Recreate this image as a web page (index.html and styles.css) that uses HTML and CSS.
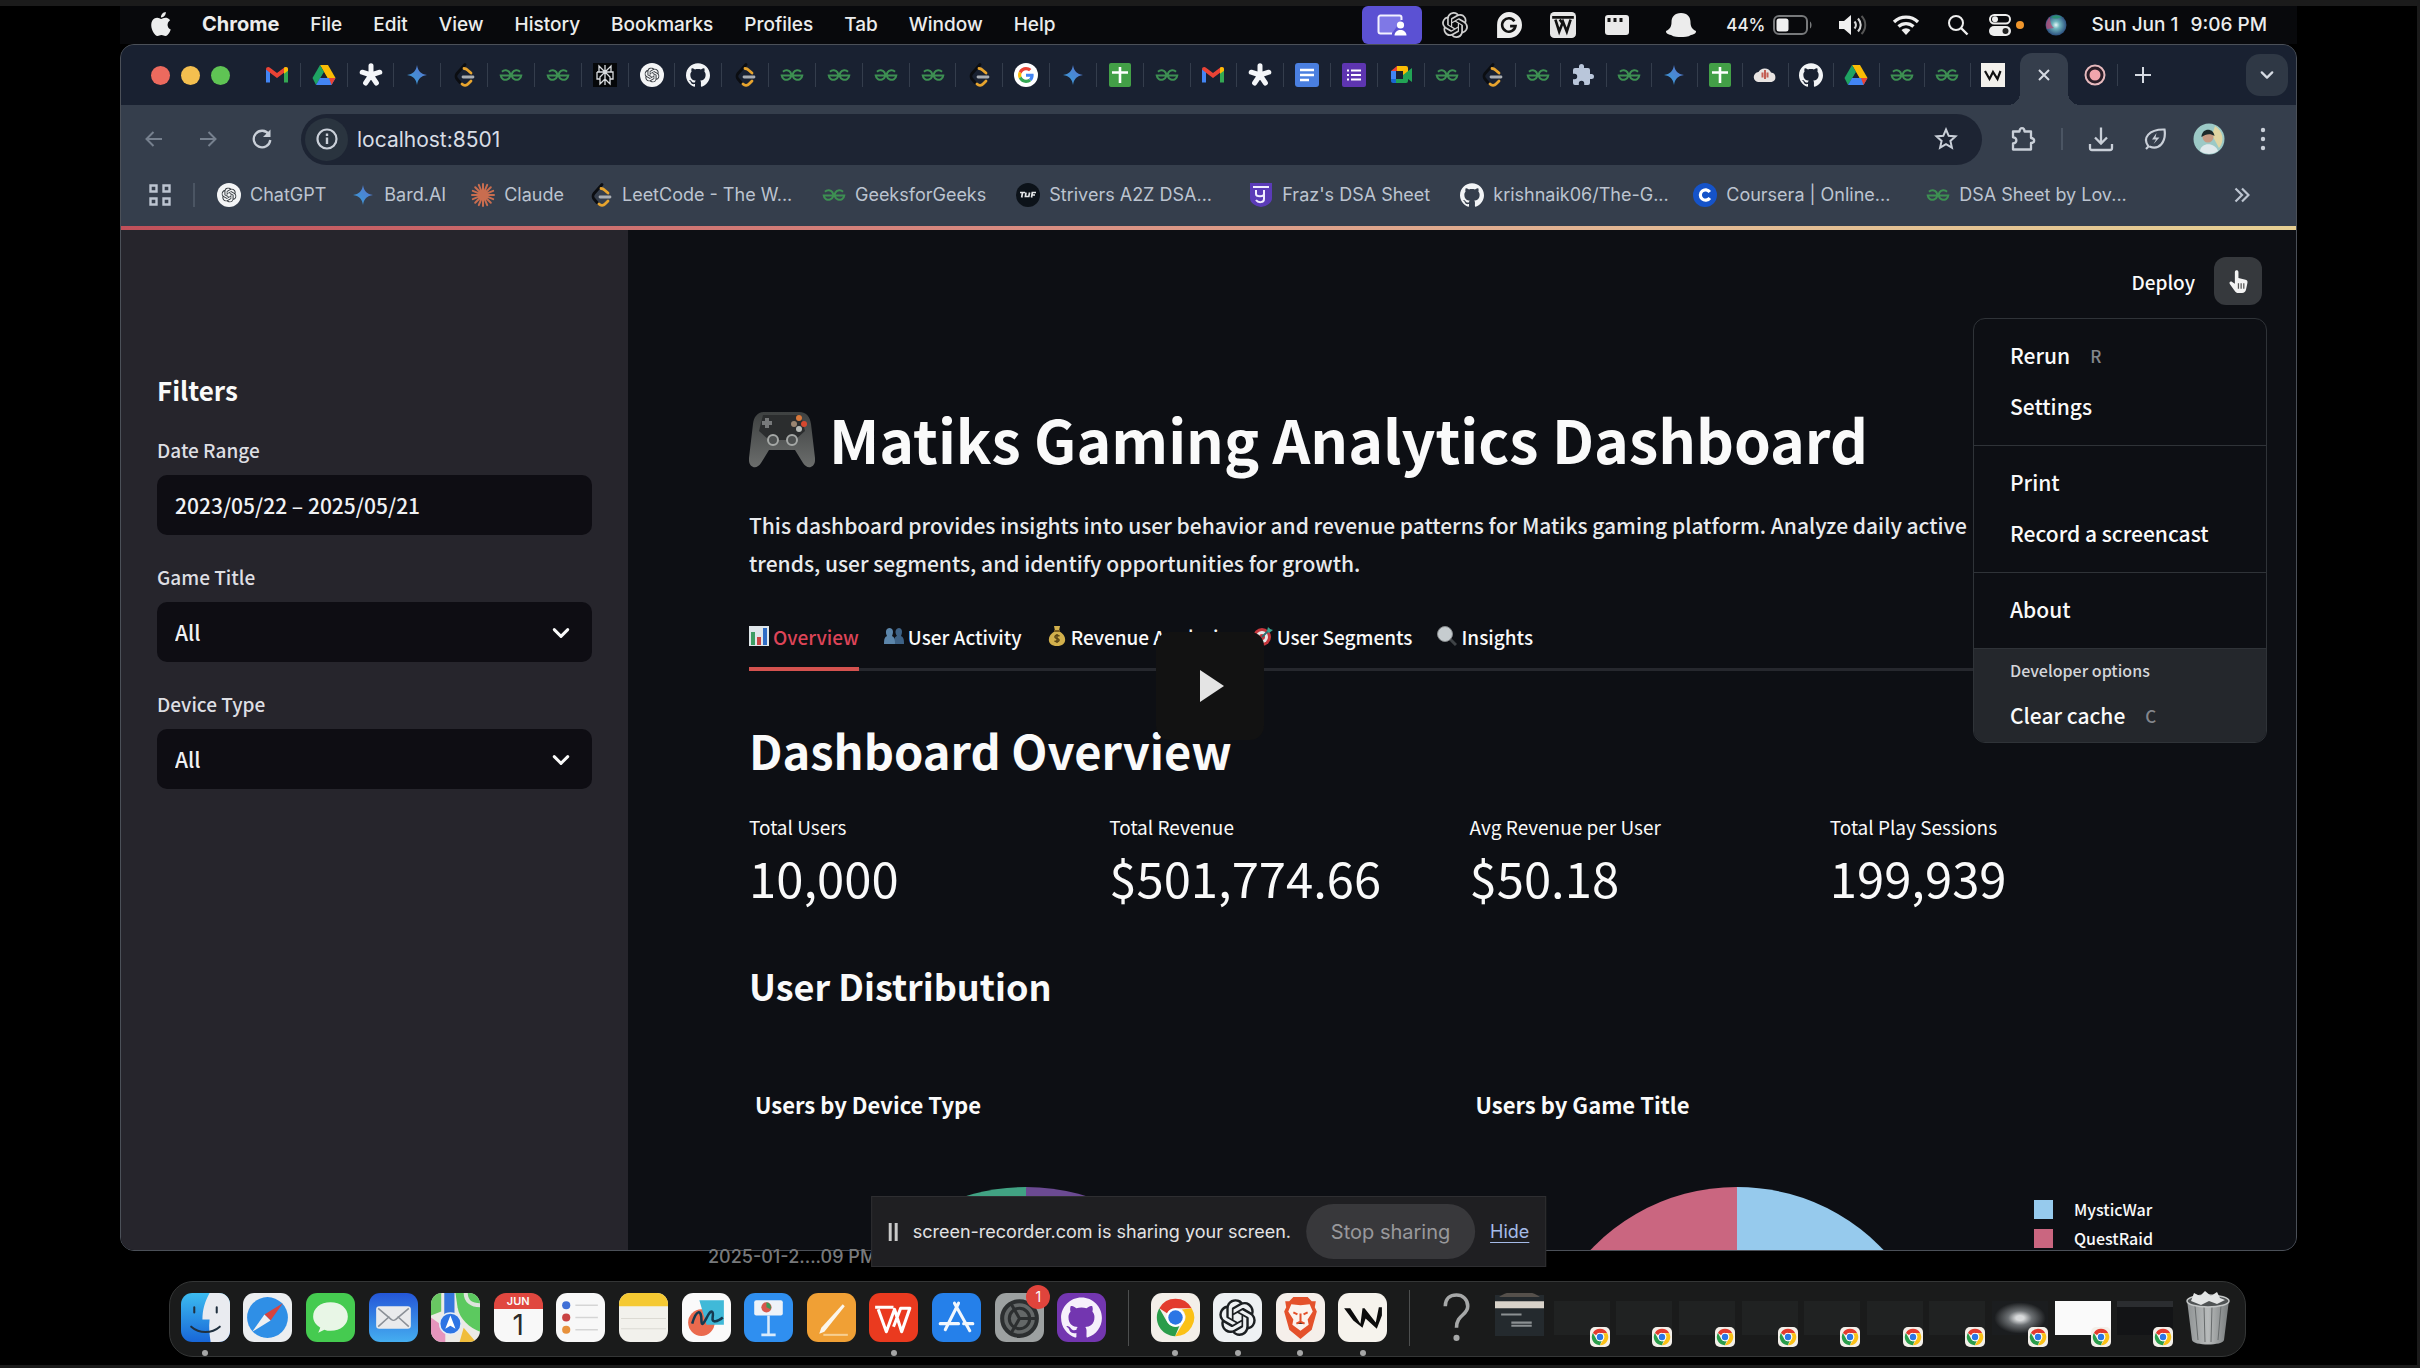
FILE: index.html
```html
<!DOCTYPE html>
<html lang="en">
<head>
<meta charset="utf-8">
<meta name="viewport" content="width=device-width, initial-scale=1">
<title>Matiks Gaming Analytics Dashboard</title>
<link rel="stylesheet" href="styles.css">
</head>
<body>
<svg class="sprite" aria-hidden="true">
  <symbol id="apple" viewBox="0 0 24 24"><path fill="currentColor" d="M12.152 6.896c-.948 0-2.415-1.078-3.96-1.04-2.04.027-3.91 1.183-4.961 3.014-2.117 3.675-.546 9.103 1.519 12.09 1.013 1.454 2.208 3.09 3.792 3.039 1.52-.065 2.09-.987 3.935-.987 1.831 0 2.35.987 3.96.948 1.637-.026 2.676-1.48 3.676-2.948 1.156-1.688 1.636-3.325 1.662-3.415-.039-.013-3.182-1.221-3.22-4.857-.026-3.04 2.48-4.494 2.597-4.559-1.429-2.09-3.623-2.324-4.39-2.376-2-.156-3.675 1.09-4.61 1.09zM15.53 3.83c.843-1.012 1.4-2.427 1.245-3.83-1.207.052-2.662.805-3.532 1.818-.78.896-1.454 2.338-1.273 3.714 1.338.104 2.715-.688 3.559-1.701"/></symbol>
  <symbol id="openai" viewBox="0 0 24 24"><path fill="currentColor" d="M22.2819 9.8211a5.9847 5.9847 0 0 0-.5157-4.9108 6.0462 6.0462 0 0 0-6.5098-2.9A6.0651 6.0651 0 0 0 4.9807 4.1818a5.9847 5.9847 0 0 0-3.9977 2.9 6.0462 6.0462 0 0 0 .7427 7.0966 5.98 5.98 0 0 0 .511 4.9107 6.051 6.051 0 0 0 6.5146 2.9001A5.9847 5.9847 0 0 0 13.2599 24a6.0557 6.0557 0 0 0 5.7718-4.2058 5.9894 5.9894 0 0 0 3.9977-2.9001 6.0557 6.0557 0 0 0-.7475-7.0729zm-9.022 12.6081a4.4755 4.4755 0 0 1-2.8764-1.0408l.1419-.0804 4.7783-2.7582a.7948.7948 0 0 0 .3927-.6813v-6.7369l2.02 1.1686a.071.071 0 0 1 .038.052v5.5826a4.504 4.504 0 0 1-4.4945 4.4944zm-9.6607-4.1254a4.4708 4.4708 0 0 1-.5346-3.0137l.142.0852 4.783 2.7582a.7712.7712 0 0 0 .7806 0l5.8428-3.3685v2.3324a.0804.0804 0 0 1-.0332.0615L9.74 19.9502a4.4992 4.4992 0 0 1-6.1408-1.6464zM2.3408 7.8956a4.485 4.485 0 0 1 2.3655-1.9728V11.6a.7664.7664 0 0 0 .3879.6765l5.8144 3.3543-2.0201 1.1685a.0757.0757 0 0 1-.071 0l-4.8303-2.7865A4.504 4.504 0 0 1 2.3408 7.872zm16.5963 3.8558L13.1038 8.364 15.1192 7.2a.0757.0757 0 0 1 .071 0l4.8303 2.7913a4.4944 4.4944 0 0 1-.6765 8.1042v-5.6772a.79.79 0 0 0-.407-.667zm2.0107-3.0231l-.142-.0852-4.7735-2.7818a.7759.7759 0 0 0-.7854 0L9.409 9.2297V6.8974a.0662.0662 0 0 1 .0284-.0615l4.8303-2.7866a4.4992 4.4992 0 0 1 6.6802 4.66zM8.3065 12.863l-2.02-1.1638a.0804.0804 0 0 1-.038-.0567V6.0742a4.4992 4.4992 0 0 1 7.3757-3.4537l-.142.0805L8.704 5.459a.7948.7948 0 0 0-.3927.6813zm1.0976-2.3654l2.602-1.4998 2.6069 1.4998v2.9994l-2.5974 1.4997-2.6067-1.4997Z"/></symbol>
  <symbol id="github" viewBox="0 0 24 24"><path fill="currentColor" d="M12 .297c-6.63 0-12 5.373-12 12 0 5.303 3.438 9.8 8.205 11.385.6.113.82-.258.82-.577 0-.285-.01-1.04-.015-2.04-3.338.724-4.042-1.61-4.042-1.61C4.422 18.07 3.633 17.7 3.633 17.7c-1.087-.744.084-.729.084-.729 1.205.084 1.838 1.236 1.838 1.236 1.07 1.835 2.809 1.305 3.495.998.108-.776.417-1.305.76-1.605-2.665-.3-5.466-1.332-5.466-5.93 0-1.31.465-2.38 1.235-3.22-.135-.303-.54-1.523.105-3.176 0 0 1.005-.322 3.3 1.23.96-.267 1.98-.399 3-.405 1.02.006 2.04.138 3 .405 2.28-1.552 3.285-1.23 3.285-1.23.645 1.653.24 2.873.12 3.176.765.84 1.23 1.91 1.23 3.22 0 4.61-2.805 5.625-5.475 5.92.42.36.81 1.096.81 2.22 0 1.606-.015 2.896-.015 3.286 0 .315.21.69.825.57C20.565 22.092 24 17.592 24 12.297c0-6.627-5.373-12-12-12"/></symbol>
  <symbol id="chatgpt" viewBox="0 0 24 24"><circle cx="12" cy="12" r="12" fill="#f4f5f6"/><g color="#33383d"><use href="#openai" x="4.500" y="4.500" width="15" height="15"/></g></symbol>
  <symbol id="gmail" viewBox="0 0 24 24"><path d="M1 19.500V6l4 3v10.500z" fill="#4285f4"/><path d="M23 19.500V6l-4 3v10.500z" fill="#34a853"/><path d="M1 6.500C1 4 3.500 3.500 5 4.700L12 10l7-5.300c1.500-1.200 4-.7 4 1.800l-4 3.200-7 5.300-7-5.300z" fill="#ea4335"/><path d="M19 4.700c1.500-1.200 4-.7 4 1.800v1.200l-4 3z" fill="#fbbc04"/></symbol>
  <symbol id="drive" viewBox="0 0 24 24"><path d="M8 2h8l7.500 13h-8z" fill="#fbbc04"/><path d="M8 2l4 7-8 13-3.500-7z" fill="#1ea362"/><path d="M4 22l4-7h15.500l-4 7z" fill="#4285f4"/><path d="M23.500 15h-6.500l2.500 7z" fill="#ea4335"/><path d="M12 9.500l3.200 5.500H8.800z" fill="#192131"/></symbol>
  <symbol id="asterisk" viewBox="0 0 24 24"><g stroke="#f4f6f9" stroke-width="5" stroke-linecap="round"><path d="M12 12V2.800M12 12l8.800-2.800M12 12l5.400 8M12 12l-5.400 8M12 12L3.200 9.200"/></g></symbol>
  <symbol id="gemini" viewBox="0 0 24 24"><linearGradient id="gem" x1="0" y1="1" x2="1" y2="0"><stop stop-color="#36a0d8"/><stop offset="1" stop-color="#5a72cf"/></linearGradient><path fill="url(#gem)" d="M12 2c.8 6 4 9.200 10 10-6 .8-9.200 4-10 10-.8-6-4-9.200-10-10 6-.8 9.200-4 10-10z"/></symbol>
  <symbol id="leet" viewBox="0 0 24 24"><g fill="none" stroke-linecap="round" stroke-width="2.800"><path d="M13 1.500L5 10.500c-1.300 1.500-1.300 4 0 5.500l3 3.500" stroke="#0b0d11"/><path d="M10 21c2 2 4.500 1.500 6 0l3-3M12 5.500c1.500 0 2.500.5 3.500 1.500L19 10" stroke="#e7a42e"/><path d="M11 14h10" stroke="#a9adb3"/></g></symbol>
  <symbol id="gfg" viewBox="0 0 24 24"><g fill="none" stroke="#3d8f52" stroke-width="2"><path d="M21 8.700A4.800 4.800 0 1 0 22.300 12.500H12.500"/><path d="M3 8.700A4.800 4.800 0 1 1 1.700 12.500H11.500"/></g></symbol>
  <symbol id="perplexity" viewBox="0 0 24 24"><path fill="#050709" d="M0 0h24v24H0z"/><path d="M12 2v20M6 3l6 6 6-6v6H6zM4 9h16v7h-3M4 9v7h3M7 21v-7l5-5 5 5v7l-5-5z" fill="none" stroke="#d9dcdf" stroke-width="1.300"/></symbol>
  <symbol id="gglyph" viewBox="0 0 48 48"><path fill="#EA4335" d="M24 9.500c3.540 0 6.710 1.220 9.210 3.600l6.850-6.850C35.900 2.380 30.470 0 24 0 14.620 0 6.510 5.380 2.560 13.220l7.980 6.190C12.430 13.720 17.740 9.500 24 9.500z"/><path fill="#4285F4" d="M46.980 24.550c0-1.570-.15-3.090-.38-4.550H24v9.020h12.940c-.58 2.960-2.260 5.480-4.780 7.180l7.730 6c4.510-4.180 7.090-10.360 7.090-17.650z"/><path fill="#FBBC05" d="M10.530 28.590c-.48-1.450-.76-2.990-.76-4.590s.27-3.140.76-4.590l-7.980-6.190C.92 16.460 0 20.120 0 24c0 3.880.92 7.540 2.560 10.780l7.970-6.190z"/><path fill="#34A853" d="M24 48c6.480 0 11.930-2.130 15.890-5.810l-7.730-6c-2.150 1.450-4.920 2.300-8.160 2.300-6.260 0-11.570-4.220-13.470-9.910l-7.980 6.190C6.510 42.620 14.620 48 24 48z"/></symbol>
  <symbol id="google" viewBox="0 0 24 24"><circle cx="12" cy="12" r="12" fill="#fff"/><use href="#gglyph" x="4" y="4" width="16" height="16"/></symbol>
  <symbol id="sheets" viewBox="0 0 24 24"><rect x="1" width="22" height="24" rx="2" fill="#43a047"/><path d="M12 4v16M4 9.500h16" stroke="#fff" stroke-width="2.600"/></symbol>
  <symbol id="docs" viewBox="0 0 24 24"><rect width="24" height="24" rx="3" fill="#4a7fe0"/><path d="M5 7h14M5 12h14M5 17h9" stroke="#fff" stroke-width="2.400"/></symbol>
  <symbol id="forms" viewBox="0 0 24 24"><rect width="24" height="24" rx="2" fill="#5e35b1"/><path d="M9 7.500h10M9 12h10M9 16.500h10M5 7.500h2M5 12h2M5 16.500h2" stroke="#fff" stroke-width="2.200"/></symbol>
  <symbol id="meet" viewBox="0 0 24 24"><path d="M2 8l6-5v5z" fill="#ea4335"/><path d="M8 3h9a2 2 0 0 1 2 2v7h-5V8H8z" fill="#fbbc04"/><path d="M2 8h5v8H2z" fill="#4285f4"/><path d="M2 16h5v4H4a2 2 0 0 1-2-2z" fill="#1967d2"/><path d="M7 16h7v-4l9-7v14l-4-3v2a2 2 0 0 1-2 2H7z" fill="#22a455"/></symbol>
  <symbol id="puzzlefill" viewBox="0 0 24 24"><path fill="#b9c6da" d="M20.500 11H19V7a2 2 0 0 0-2-2h-4V3.500a2.500 2.500 0 0 0-5 0V5H4a2 2 0 0 0-2 2v3.800h1.500a2.700 2.700 0 0 1 0 5.400H2V20a2 2 0 0 0 2 2h3.800v-1.500a2.700 2.700 0 0 1 5.400 0V22H17a2 2 0 0 0 2-2v-4h1.500a2.500 2.500 0 0 0 0-5z"/></symbol>
  <symbol id="cloud" viewBox="0 0 24 24"><path fill="#e8e4e2" d="M6 19a5 5 0 0 1-.5-10A7 7 0 0 1 18 9.500 4.800 4.800 0 0 1 18.500 19z"/><path d="M12 7v9M9.500 9.500v5M14.500 9.500v5" stroke="#c45f55" stroke-width="2"/></symbol>
  <symbol id="wsite" viewBox="0 0 24 24"><path fill="#f3f1ec" d="M0 0h24v24H0z"/><path d="M4 8l4.500 8L12 9l4.500 7 3-8" fill="none" stroke="#111" stroke-width="2.200"/></symbol>
  <symbol id="claude" viewBox="0 0 24 24"><g stroke="#c96d4f" stroke-width="2" stroke-linecap="round"><path d="M12 1v22M1 12h22M4.200 4.200l15.600 15.600M19.800 4.200L4.200 19.800M7.800 1.800l8.400 20.400M16.200 1.800L7.800 22.200M1.800 7.800l20.400 8.400M22.200 7.800L1.800 16.200"/></g></symbol>
  <symbol id="tuf" viewBox="0 0 24 24"><circle cx="12" cy="12" r="12" fill="#0c1219"/><path d="M4 9.500h5M6.500 9.500l-.8 5M10 9.500l-.6 4h3.400l.8-4M15.500 14.500l.8-5H20M16 12h3" fill="none" stroke="#e4e6e8" stroke-width="1.700"/></symbol>
  <symbol id="fraz" viewBox="0 0 24 24"><path fill="#5b3bb8" d="M1 0h22v15c0 5-5 8-11 9C6 23 1 20 1 15z"/><path d="M4 4h16M7 7v4c0 3 8 3 8 0V7v9c0 4-6 4-8 1" fill="none" stroke="#f1edff" stroke-width="2"/></symbol>
  <symbol id="coursera" viewBox="0 0 24 24"><circle cx="12" cy="12" r="12" fill="#1553c9"/><path d="M16.800 9a5.200 5.200 0 1 0 0 6" fill="none" stroke="#fff" stroke-width="3.200"/></symbol>
  <symbol id="chrome" viewBox="0 0 48 48"><path fill="#e33b2e" d="M24 2a22 22 0 0 1 19 11H24a11 11 0 0 0-10 6L5 13A22 22 0 0 1 24 2z"/><path fill="#fbc116" d="M43 13a22 22 0 0 1-19.500 33L33.500 30a11 11 0 0 0-2-15.500z"/><path fill="#2a9d4a" d="M5 13l9.500 17a11 11 0 0 0 14 4L23.500 46A22 22 0 0 1 5 13z"/><circle cx="24" cy="24" r="11" fill="#fff"/><circle cx="24" cy="24" r="8.500" fill="#2b76e5"/></symbol>
  <symbol id="chev" viewBox="0 0 16 16"><path d="M2 5l6 6 6-6" fill="none" stroke="currentColor" stroke-width="2.600" stroke-linecap="round" stroke-linejoin="round"/></symbol>
</svg>

<div class="desktop">
  <header class="menubar">
    <nav class="menubar__menus" aria-label="Application menu">
      <svg class="menubar__apple"><use href="#apple"/></svg>
      <button class="menubar__app">Chrome</button><button>File</button><button>Edit</button><button>View</button><button>History</button><button>Bookmarks</button><button>Profiles</button><button>Tab</button><button>Window</button><button>Help</button>
    </nav>
    <ul class="status">
      <li class="status__share"><svg width="30" height="24" viewBox="0 0 30 24"><path d="M15 20.500H3.500a2 2 0 0 1-2-2v-14a2 2 0 0 1 2-2h19a2 2 0 0 1 2 2V7" fill="#7f78e6" stroke="#f2f1ff" stroke-width="2"/><circle cx="23.500" cy="12" r="3.600" fill="#fff"/><path d="M17.500 22.500c0-7.500 12-7.500 12 0z" fill="#fff"/></svg></li>
      <li class="status__slot"><svg width="26" height="26"><use href="#openai"/></svg></li>
      <li class="status__slot"><svg width="26" height="26" viewBox="0 0 24 24"><path d="M12 0a12 12 0 1 1 0 24H1V12A11.500 11.500 0 0 1 12 0z" fill="#eee"/><path d="M17 8.500A6.200 6.200 0 1 0 18 13h-5" fill="none" stroke="#111" stroke-width="2.400"/></svg></li>
      <li class="status__slot"><svg width="26" height="26" viewBox="0 0 24 24"><rect width="24" height="24" rx="4" fill="#e6e6e6"/><path d="M2 5h20M5 7l3.500 11L12 9l3.500 9L19 7M9 7l3 4" fill="none" stroke="#111" stroke-width="2.400"/></svg></li>
      <li class="status__slot"><svg width="26" height="22" viewBox="0 0 26 22"><rect x="1" y="1" width="24" height="20" rx="3" fill="#e9e9e9"/><path d="M5 4v4M11 4v4M17 4v4" stroke="#111" stroke-width="3"/></svg></li>
      <li class="status__slot status__slot--wide"><svg width="32" height="24" viewBox="0 0 32 24"><path fill="#ececec" d="M16 0c6.500 0 9.500 4 9.500 9 0 4 1 7 5.500 9 0 3-2 3-5 4-3 2-7 2-10 2s-7 0-10-2c-3-1-5-1-5-4 4.500-2 5.500-5 5.500-9 0-5 3-9 9.500-9z"/></svg></li>
      <li class="status__battery"><span>44%</span><svg width="40" height="20" viewBox="0 0 40 20"><rect x="1" y="1" width="33" height="18" rx="5" fill="none" stroke="#77797b" stroke-width="2"/><rect x="3.500" y="3.500" width="12" height="13" rx="2.500" fill="#f0f0f0"/><path d="M37 6.500c2 1 2 6 0 7z" fill="#77797b"/></svg></li>
      <li class="status__slot"><svg width="30" height="24" viewBox="0 0 30 24"><path d="M2 8h5l7-6v20l-7-6H2z" fill="#efefef"/><path d="M17.500 8.500c1.800 2 1.800 5 0 7M21 5.500c3.500 4 3.500 9 0 13" fill="none" stroke="#d6d6d6" stroke-width="2.200"/><path d="M24.500 3c5 5 5 13 0 18" fill="none" stroke="#555" stroke-width="2"/></svg></li>
      <li class="status__slot"><svg width="28" height="22" viewBox="0 0 28 22"><path d="M2 8a17 17 0 0 1 24 0M6.500 12.500a11 11 0 0 1 15 0" fill="none" stroke="#efefef" stroke-width="3.200"/><path d="M14 21l-4.500-5a6.500 6.500 0 0 1 9 0z" fill="#efefef"/></svg></li>
      <li class="status__slot status__slot--narrow"><svg width="22" height="22" viewBox="0 0 22 22"><circle cx="9" cy="9" r="7" fill="none" stroke="#efefef" stroke-width="2"/><path d="M14 14l6.500 6.500" stroke="#efefef" stroke-width="2.400"/></svg></li>
      <li class="status__slot status__slot--narrow"><svg width="38" height="22" viewBox="0 0 38 22"><rect x="1" y="1" width="20" height="8.500" rx="4.200" fill="none" stroke="#eee" stroke-width="2"/><circle cx="6" cy="5.200" r="3" fill="#eee"/><rect y="12" width="22" height="10" rx="5" fill="#eee"/><circle cx="16.500" cy="17" r="3" fill="#222"/><circle cx="31" cy="11" r="4" fill="#f0962c"/></svg></li>
      <li class="status__slot status__slot--siri"><svg width="22" height="22" viewBox="0 0 22 22"><radialGradient id="siri"><stop stop-color="#e6f6f8"/><stop offset=".35" stop-color="#6fb5bd"/><stop offset="1" stop-color="#2c4f7e"/></radialGradient><circle cx="11" cy="11" r="10.500" fill="url(#siri)"/><path d="M2 15A10 10 0 0 1 5 3c0 4 1 9 4 11z" fill="#b04c78" opacity=".8"/><path d="M6 3a10 10 0 0 1 11 0c-3 1-7 3-11 0z" fill="#2a8f74"/></svg></li>
      <li class="status__clock"><span>Sun Jun 1</span><span>9:06 PM</span></li>
    </ul>
  </header>

  <section class="window">
    <div class="tabstrip">
      <div class="lights"><i class="light light--close"></i><i class="light light--min"></i><i class="light light--max"></i></div>
      <ul class="tabs">
        <li><svg><use href="#gmail"/></svg></li><li><svg><use href="#drive"/></svg></li><li><svg><use href="#asterisk"/></svg></li><li><svg><use href="#gemini"/></svg></li><li><svg><use href="#leet"/></svg></li><li><svg><use href="#gfg"/></svg></li><li><svg><use href="#gfg"/></svg></li><li><svg><use href="#perplexity"/></svg></li><li><svg><use href="#chatgpt"/></svg></li><li><svg><use href="#github"/></svg></li>
        <li><svg><use href="#leet"/></svg></li><li><svg><use href="#gfg"/></svg></li><li><svg><use href="#gfg"/></svg></li><li><svg><use href="#gfg"/></svg></li><li><svg><use href="#gfg"/></svg></li><li><svg><use href="#leet"/></svg></li><li><svg><use href="#google"/></svg></li><li><svg><use href="#gemini"/></svg></li><li><svg><use href="#sheets"/></svg></li><li><svg><use href="#gfg"/></svg></li>
        <li><svg><use href="#gmail"/></svg></li><li><svg><use href="#asterisk"/></svg></li><li><svg><use href="#docs"/></svg></li><li><svg><use href="#forms"/></svg></li><li><svg><use href="#meet"/></svg></li><li><svg><use href="#gfg"/></svg></li><li><svg><use href="#leet"/></svg></li><li><svg><use href="#gfg"/></svg></li><li><svg><use href="#puzzlefill"/></svg></li><li><svg><use href="#gfg"/></svg></li>
        <li><svg><use href="#gemini"/></svg></li><li><svg><use href="#sheets"/></svg></li><li><svg><use href="#cloud"/></svg></li><li><svg><use href="#github"/></svg></li><li><svg><use href="#drive"/></svg></li><li><svg><use href="#gfg"/></svg></li><li><svg><use href="#gfg"/></svg></li><li><svg><use href="#wsite"/></svg></li>
      </ul>
      <button class="activetab" aria-label="Close tab"><svg width="14" height="14" viewBox="0 0 14 14"><path d="M2 2l10 10M12 2L2 12" stroke="currentColor" stroke-width="2"/></svg></button>
      <div class="rectab"><svg width="22" height="22" viewBox="0 0 22 22"><circle cx="11" cy="11" r="9.500" fill="#2a1d27" stroke="#e6b9bd" stroke-width="2"/><circle cx="11" cy="11" r="5.500" fill="#f1a5ac"/></svg></div>
      <button class="newtab" aria-label="New tab"><svg width="18" height="18" viewBox="0 0 18 18"><path d="M9 1v16M1 9h16" stroke="currentColor" stroke-width="2"/></svg></button>
      <button class="tabsearch" aria-label="Search tabs"><svg width="14" height="14"><use href="#chev"/></svg></button>
    </div>

    <div class="toolbar">
      <button class="navbtn navbtn--off" aria-label="Back"><svg width="20" height="20" viewBox="0 0 20 20"><path d="M18 10H3M9.500 3L2.500 10l7 7" fill="none" stroke="currentColor" stroke-width="2"/></svg></button>
      <button class="navbtn navbtn--off" aria-label="Forward"><svg width="20" height="20" viewBox="0 0 20 20"><path d="M2 10h15M10.500 3l7 7-7 7" fill="none" stroke="currentColor" stroke-width="2"/></svg></button>
      <button class="navbtn" aria-label="Reload"><svg width="22" height="22" viewBox="0 0 22 22"><path d="M18 6.500A8.300 8.300 0 1 0 19.300 12" fill="none" stroke="currentColor" stroke-width="2.300"/><path d="M19.500 1.500v7.500H12z" fill="currentColor"/></svg></button>
      <div class="omnibox">
        <span class="omnibox__info"><svg width="22" height="22" viewBox="0 0 22 22"><circle cx="11" cy="11" r="9.500" fill="none" stroke="currentColor" stroke-width="2.200"/><path d="M11 9.500V16M11 5.500v2.400" stroke="currentColor" stroke-width="2.400"/></svg></span>
        <input class="omnibox__input" type="text" value="localhost:8501" aria-label="Address">
        <svg width="24" height="24" viewBox="0 0 24 24"><path d="M12 2.500l2.700 6.300 6.800.6-5.100 4.500 1.500 6.700L12 17.100l-5.900 3.500 1.500-6.700-5.100-4.500 6.800-.6z" fill="none" stroke="currentColor" stroke-width="2"/></svg>
      </div>
      <button class="toolbtn" aria-label="Extensions"><svg width="26" height="26" viewBox="0 0 26 26"><path d="M3 5.500h6.500c0-4.500 5-4.500 5 0H21v6.500c4.200.3 4.200 5 0 5V23.500H3v-6c4.500-.3 4.500-6 0-6.200z" fill="none" stroke="currentColor" stroke-width="2.300" stroke-linejoin="round"/></svg></button>
      <i class="toolbar__sep"></i>
      <button class="toolbtn" aria-label="Downloads"><svg width="26" height="26" viewBox="0 0 26 26"><path d="M13 1.500v16M7 11.500l6 6 6-6M2 18v4a2 2 0 0 0 2 2h18a2 2 0 0 0 2-2v-4" fill="none" stroke="currentColor" stroke-width="2.300"/></svg></button>
      <button class="toolbtn" aria-label="Energy saver"><svg width="24" height="24" viewBox="0 0 24 24"><path d="M3 22l2.500-2.500C-1 11 6 2 21.500 2.500 23.500 15 16 23.500 6.500 19.500" fill="none" stroke="currentColor" stroke-width="2.200"/><path d="M13.500 6L9 12.500h4L10.500 17l6-6.500h-4z" fill="currentColor"/></svg></button>
      <button class="toolbtn" aria-label="Profile"><svg width="32" height="32" viewBox="0 0 32 32"><circle cx="16" cy="16" r="15.500" fill="#9cc9c6"/><path d="M22 3c8 5 10 15 4 22L19 12z" fill="#e0d5a2"/><circle cx="15" cy="14" r="5.500" fill="#c69a83"/><path d="M8.500 14c0-9 12-10 13-1-4-3-9-2-13 1z" fill="#1d2a2b"/><path d="M7 28c1-9 15-9 18 0a15 15 0 0 1-18 0z" fill="#dfe9ec"/></svg></button>
      <button class="toolbtn" aria-label="Menu"><svg width="6" height="24" viewBox="0 0 6 24"><g fill="currentColor"><circle cx="3" cy="3" r="2.200"/><circle cx="3" cy="12" r="2.200"/><circle cx="3" cy="21" r="2.200"/></g></svg></button>
    </div>

    <nav class="bookmarks" aria-label="Bookmarks">
      <svg width="22" height="22" viewBox="0 0 22 22"><path d="M1.500 1.500h6v6h-6zM14.500 1.500h6v6h-6zM1.500 14.500h6v6h-6zM14.500 14.500h6v6h-6z" fill="none" stroke="currentColor" stroke-width="2.400"/></svg>
      <i class="bookmarks__sep"></i>
      <a href="#"><svg><use href="#chatgpt"/></svg>ChatGPT</a>
      <a href="#"><svg><use href="#gemini"/></svg>Bard.AI</a>
      <a href="#"><svg><use href="#claude"/></svg>Claude</a>
      <a href="#" class="bookmarks__long"><svg><use href="#leet"/></svg>LeetCode - The W...</a>
      <a href="#" class="bookmarks__mid"><svg><use href="#gfg"/></svg>GeeksforGeeks</a>
      <a href="#" class="bookmarks__long"><svg><use href="#tuf"/></svg>Strivers A2Z DSA...</a>
      <a href="#" class="bookmarks__mid"><svg><use href="#fraz"/></svg>Fraz's DSA Sheet</a>
      <a href="#" class="bookmarks__long"><svg><use href="#github"/></svg>krishnaik06/The-G...</a>
      <a href="#" class="bookmarks__long"><svg><use href="#coursera"/></svg>Coursera | Online...</a>
      <a href="#" class="bookmarks__long"><svg><use href="#gfg"/></svg>DSA Sheet by Lov...</a>
      <svg class="bookmarks__more" width="16" height="16" viewBox="0 0 16 16"><path d="M1.500 1.500L8 8l-6.500 6.500M8 1.500L14.500 8 8 14.500" fill="none" stroke="currentColor" stroke-width="2.200"/></svg>
    </nav>

    <div class="page">
      <aside class="sidebar">
        <h2 class="sidebar__title">Filters</h2>
        <div class="field"><label for="range">Date Range</label><input id="range" class="field__box" type="text" value="2023/05/22 – 2025/05/21"></div>
        <div class="field"><label for="game">Game Title</label><div class="field__select"><select id="game" class="field__box"><option>All</option></select><svg><use href="#chev"/></svg></div></div>
        <div class="field"><label for="device">Device Type</label><div class="field__select"><select id="device" class="field__box"><option>All</option></select><svg><use href="#chev"/></svg></div></div>
      </aside>

      <main class="main">
        <header class="appbar">
          <button class="appbar__deploy">Deploy</button>
          <button class="appbar__menu" aria-label="Main menu"><svg width="22" height="25" viewBox="0 0 24 28"><path d="M8.500 3.500c0-2.800 4-2.800 4 0V10l8 2c2 .5 2.500 2 2 4l-1.500 7c-.5 2.500-2 4-4.500 4h-4c-2 0-3-1-4.500-3L3 17c-1.500-2 .5-4 2.500-2.500l3 2z" fill="#f3f3f3"/><path d="M12.500 16v6M15.500 16v6M18.500 16v6" stroke="#555" stroke-width="1.400"/></svg></button>
          <div class="menu" role="menu">
            <div class="menu__group"><button role="menuitem">Rerun <kbd>R</kbd></button><button role="menuitem">Settings</button></div>
            <div class="menu__group"><button role="menuitem">Print</button><button role="menuitem">Record a screencast</button></div>
            <div class="menu__group"><button role="menuitem">About</button></div>
            <div class="menu__group menu__group--dev"><p>Developer options</p><button role="menuitem">Clear cache <kbd>C</kbd></button></div>
          </div>
        </header>

        <div class="content">
          <h1><svg class="pad" viewBox="0 0 66 58"><linearGradient id="padg" x2="0" y2="1"><stop stop-color="#3e4141"/><stop offset="1" stop-color="#6b6d6c"/></linearGradient><path d="M16 2h34c8 0 11 5 12 12l4 34c1 10-8 12-12 5l-8-13H20l-8 13c-4 7-13 5-12-5l4-34C5 7 8 2 16 2z" fill="url(#padg)"/><path d="M14 5h38l4 16-10 9H20l-10-9z" fill="#2b2d2e"/><path d="M18 8v10M13 13h10" stroke="#77797a" stroke-width="4"/><circle cx="50" cy="8" r="3" fill="#d9793c"/><circle cx="55" cy="14" r="3" fill="#d6482f"/><circle cx="45" cy="14" r="3" fill="#9a8571"/><circle cx="50" cy="19" r="3" fill="#b9bcb8"/><g fill="#4d5050" stroke="#a5a8a6" stroke-width="2"><circle cx="24" cy="30" r="5"/><circle cx="43" cy="30" r="5"/></g></svg>Matiks Gaming Analytics Dashboard</h1>
          <p class="lead">This dashboard provides insights into user behavior and revenue patterns for Matiks gaming platform. Analyze daily active<br>trends, user segments, and identify opportunities for growth.</p>

          <div class="viewtabs" role="tablist">
            <button role="tab" aria-selected="true" class="is-active"><svg viewBox="0 0 20 20"><path fill="#dfe6ea" d="M0 0h20v20H0z"/><path fill="#3d9d63" d="M2 6h4v13H2z"/><path fill="#c94343" d="M8 11h4v8H8z"/><path fill="#2f6cc4" d="M14 2h4v17h-4z"/></svg>Overview</button>
            <button role="tab" aria-selected="false"><svg viewBox="0 0 20 20"><path fill="#3e6286" d="M10 18c0-7 1-7 3-8-3-4-1-8 2-8s4 4 2 8c2 1 3 2 3 8z"/><path fill="#5c86ab" d="M0 18c0-6 1-7 3-8-2-4-1-8 2.500-8S10 6 8 10c2 1 3 2 3 8z"/></svg>User Activity</button>
            <button role="tab" aria-selected="false"><svg viewBox="0 0 20 20"><path fill="#d2b04c" d="M7 0h6l-1 5c9 5 8 15-2 15S-1 10 8 5z"/><path d="M7 5h6" stroke="#7b5f20" stroke-width="2"/><path d="M12.500 10c-5-2-6 2-2.500 2.500s2.500 4.500-2.500 2.500M10 8v9" fill="none" stroke="#5d4817" stroke-width="1.500"/></svg>Revenue Analysis</button>
            <button role="tab" aria-selected="false"><svg viewBox="0 0 20 20"><circle cx="9" cy="11" r="9" fill="#c5373d"/><circle cx="9" cy="11" r="6" fill="#e8e8e8"/><circle cx="9" cy="11" r="3" fill="#c5373d"/><path d="M9 11l8-8" stroke="#2c6f73" stroke-width="2"/><path d="M14 5l1-4 2 2 3 1-4 3z" fill="#37a08e"/></svg>User Segments</button>
            <button role="tab" aria-selected="false"><svg viewBox="0 0 20 20"><path d="M12 12l7 7" stroke="#3f4346" stroke-width="3"/><circle cx="8" cy="8" r="7.500" fill="#c6cccf" stroke="#85898c"/></svg>Insights</button>
          </div>

          <h2>Dashboard Overview</h2>
          <dl class="metrics">
            <div><dt>Total Users</dt><dd>10,000</dd></div>
            <div><dt>Total Revenue</dt><dd>$501,774.66</dd></div>
            <div><dt>Avg Revenue per User</dt><dd>$50.18</dd></div>
            <div><dt>Total Play Sessions</dt><dd>199,939</dd></div>
          </dl>
          <h3>User Distribution</h3>
          <div class="charts">
            <figure>
              <figcaption>Users by Device Type</figcaption>
              <div class="plot plot--device"><svg class="pie" viewBox="0 0 404 404"><path d="M202 202V0A202 202 0 0 1 377 303z" fill="#6b4a92"/><path d="M202 202V0A202 202 0 0 0 27 303z" fill="#41a283"/></svg></div>
            </figure>
            <figure>
              <figcaption>Users by Game Title</figcaption>
              <div class="plot plot--game"><svg class="pie" viewBox="0 0 404 404"><path d="M202 202V0A202 202 0 0 1 377 303z" fill="#96caed"/><path d="M202 202V0A202 202 0 0 0 27 303z" fill="#ca6680"/></svg>
                <ul class="legend"><li class="legend__mystic">MysticWar</li><li class="legend__quest">QuestRaid</li></ul></div>
            </figure>
          </div>
        </div>
      </main>
    </div>
  </section>

  <div class="filelabel">2025-01-2....09 PM</div>

  <nav class="dock" aria-label="Dock">
    <div class="slot slot--on"><svg viewBox="0 0 48 48"><linearGradient id="fd" x2="0" y2="1"><stop stop-color="#3cbcf0"/><stop offset="1" stop-color="#1866d8"/></linearGradient><rect width="48" height="48" rx="11" fill="url(#fd)"/><path d="M28 0c-5 9-7 17-7 26h7c-1 8 0 15 1 22h8a11 11 0 0 0 11-11V11A11 11 0 0 0 37 0z" fill="#e9ebf0"/><path d="M13 14v5M35 14v5M10 33c8 7 20 7 28 0" fill="none" stroke="#20303f" stroke-width="2" stroke-linecap="round"/></svg></div>
    <div class="slot"><svg viewBox="0 0 48 48"><rect width="48" height="48" rx="11" fill="#eceef0"/><circle cx="24" cy="24" r="20" fill="#2f8fe6"/><path d="M39 10L27 27l-6-6z" fill="#d8433e"/><path d="M9 38l12-17 6 6z" fill="#eef0f2"/></svg></div>
    <div class="slot"><svg viewBox="0 0 48 48"><rect width="48" height="48" rx="11" fill="#45cb50"/><path d="M24 9c10 0 17 6 17 14s-7 14-17 14c-2 0-4 0-6-1l-6 3 2-5c-4-3-7-6-7-11 0-8 7-14 17-14z" fill="#e8f6e6"/></svg></div>
    <div class="slot"><svg viewBox="0 0 48 48"><linearGradient id="ml" x2="0" y2="1"><stop stop-color="#2456d8"/><stop offset="1" stop-color="#45aef0"/></linearGradient><rect width="48" height="48" rx="11" fill="url(#ml)"/><rect x="7" y="13" width="34" height="22" rx="3" fill="#e9eaec"/><path d="M9 33l11-10M39 33L28 23M9 15l13 11c1 1 3 1 4 0l13-11" fill="none" stroke="#8b9097" stroke-width="1.500"/></svg></div>
    <div class="slot"><svg viewBox="0 0 48 48"><clipPath id="mc"><rect width="48" height="48" rx="11"/></clipPath><g clip-path="url(#mc)"><path fill="#eceae6" d="M0 0h48v48H0z"/><path fill="#5cc95f" d="M24 0h24v38C38 34 28 26 26 14z"/><path fill="#69c862" d="M0 0h10v18L0 22z"/><path fill="#e695bd" d="M0 24l14 10v14H0z"/><path fill="#f0bd3c" d="M28 48l4-14 12 14z"/><path fill="#3576dd" d="M13 0h10v24H13z"/><path d="M34 0c0 8 6 12 14 12" fill="none" stroke="#dfe4dd" stroke-width="4"/></g><circle cx="19" cy="30" r="10.500" fill="#2d74e4" stroke="#e6ecf5" stroke-width="1.500"/><path d="M19 22l5 13-5-3-5 3z" fill="#fff"/></svg></div>
    <div class="slot"><div class="cal"><span>JUN</span><b>1</b></div></div>
    <div class="slot"><svg viewBox="0 0 48 48"><rect width="48" height="48" rx="11" fill="#f8f8f8"/><circle cx="10" cy="12" r="4" fill="#3f6fd6"/><circle cx="10" cy="24" r="4" fill="#c94343"/><circle cx="10" cy="36" r="4" fill="#e7913c"/><path d="M19 12h22M19 24h22M19 36h22" stroke="#d5d5d5" stroke-width="1.500"/></svg></div>
    <div class="slot"><svg viewBox="0 0 48 48"><rect width="48" height="48" rx="11" fill="#f2f1ec"/><path d="M0 13v-2A11 11 0 0 1 11 0h26a11 11 0 0 1 11 11v2z" fill="#f5c932"/><path d="M2 25h44M2 35h44" stroke="#dcdad3"/></svg></div>
    <div class="slot"><svg viewBox="0 0 48 48"><rect width="48" height="48" rx="11" fill="#fafafa"/><circle cx="19" cy="29" r="13" fill="#ea6a4e"/><path d="M17 7h24v24H24z" fill="#40b9d8"/><path d="M10 30c4-14 9-14 9-4s4 0 7-5 5-3 4 3 5 4 10 0" fill="none" stroke="#153a4f" stroke-width="2.500"/></svg></div>
    <div class="slot"><svg viewBox="0 0 48 48"><rect width="48" height="48" rx="11" fill="#2f8ff0"/><rect x="10" y="7" width="28" height="15" rx="2" fill="#eef3f8"/><circle cx="22" cy="14" r="5" fill="#d8584d"/><path d="M22 14v-5a5 5 0 0 1 4 7z" fill="#3f9a59"/><path d="M24 22v18M17 41h14" stroke="#d9ebfb" stroke-width="2.500"/></svg></div>
    <div class="slot"><svg viewBox="0 0 48 48"><rect width="48" height="48" rx="11" fill="#f0a035"/><path d="M35 11l2 2-20 25-5 2 2-6z" fill="#fbf6ec"/><path d="M16 41h24" stroke="#f7cf91" stroke-width="2"/></svg></div>
    <div class="slot slot--on"><svg viewBox="0 0 48 48"><rect width="48" height="48" rx="11" fill="#ea3a1f"/><path d="M6 14h18M9 16l8 22 8-22 7 22 8-23h-9l-7 18" fill="none" stroke="#fff" stroke-width="3" stroke-linejoin="round"/></svg></div>
    <div class="slot"><svg viewBox="0 0 48 48"><rect width="48" height="48" rx="11" fill="#2580ea"/><path d="M26 10L13 36M22 10l15 27M8 30h18M31 30h9" stroke="#f2f7fd" stroke-width="3" stroke-linecap="round"/></svg></div>
    <div class="slot"><svg viewBox="0 0 48 48"><rect width="48" height="48" rx="11" fill="#9da1a1"/><circle cx="24" cy="25" r="17" fill="#646868" stroke="#2c2f30" stroke-width="4"/><circle cx="24" cy="25" r="10" fill="none" stroke="#2c2f30" stroke-width="3"/><path d="M24 25H40M24 25l-8-14M24 25l-8 14" stroke="#2c2f30" stroke-width="3"/></svg><span class="badge">1</span></div>
    <div class="slot"><svg viewBox="0 0 48 48"><rect width="48" height="48" rx="11" fill="#7336b0"/><g color="#f6f0fb"><use href="#github" x="4" y="4" width="40" height="40"/></g></svg></div>
    <i class="dock__sep"></i>
    <div class="slot slot--on"><svg viewBox="0 0 48 48"><rect width="48" height="48" rx="11" fill="#f3efe9"/><use href="#chrome" x="4" y="4" width="40" height="40"/></svg></div>
    <div class="slot slot--on"><svg viewBox="0 0 48 48"><rect width="48" height="48" rx="11" fill="#eef1f3"/><g color="#1b1f22"><use href="#openai" x="6" y="6" width="36" height="36"/></g></svg></div>
    <div class="slot slot--on"><svg viewBox="0 0 48 48"><rect width="48" height="48" rx="11" fill="#f5efea"/><path d="M17 4h14l4 4 4 0-1 6 2 4-5 18-11 9-11-9-5-18 2-4-1-6h4z" fill="#e4512b"/><path d="M24 12l9-1 3 7-5 8 1 5-8 6-8-6 1-5-5-8 3-7z" fill="#fbf3ee"/><path d="M24 20v8M17 19l4 2M31 19l-4 2M20 30l4-2 4 2" stroke="#e4512b" stroke-width="2"/></svg></div>
    <div class="slot slot--on"><svg viewBox="0 0 48 48"><rect width="48" height="48" rx="11" fill="#f6f3ed"/><path d="M6 15h6l10 15 2-15h2l11 14 3-15h3v8l-5 13-11-10-3 9-9-7z" fill="#0c0c0c"/></svg></div>
    <i class="dock__sep"></i>
    <div class="slot"><svg viewBox="0 0 48 48"><path d="M13 13C13 5 18 2 24 2s11 4 11 11c0 9-11 8-11 21" fill="none" stroke="#a6a8a8" stroke-width="3.500"/><circle cx="24" cy="44" r="3" fill="#a6a8a8"/></svg></div>
    <div class="slot"><svg viewBox="0 0 48 48"><path fill="#242a2e" d="M0 2h48v40H0z"/><path d="M4 4c10-8 30-8 40 0z" fill="#55504b"/><path fill="#d8d2c9" d="M0 8h48v7H0z"/><path d="M6 21h20M16 29h20M16 32h20" stroke="#8b9092" stroke-width="2"/></svg></div>
    <div class="slot"><div class="thumb"><svg><use href="#chrome"/></svg></div></div>
    <div class="slot"><div class="thumb"><svg><use href="#chrome"/></svg></div></div>
    <div class="slot"><div class="thumb"><svg><use href="#chrome"/></svg></div></div>
    <div class="slot"><div class="thumb"><svg><use href="#chrome"/></svg></div></div>
    <div class="slot"><div class="thumb"><svg><use href="#chrome"/></svg></div></div>
    <div class="slot"><div class="thumb"><svg><use href="#chrome"/></svg></div></div>
    <div class="slot"><div class="thumb"><svg><use href="#chrome"/></svg></div></div>
    <div class="slot"><div class="thumb thumb--photo"><svg><use href="#chrome"/></svg></div></div>
    <div class="slot"><div class="thumb thumb--white"><svg><use href="#chrome"/></svg></div></div>
    <div class="slot"><div class="thumb thumb--page"><svg><use href="#chrome"/></svg></div></div>
    <div class="slot"><svg class="trash" viewBox="0 0 44 56"><linearGradient id="tr"><stop stop-color="#8e9293"/><stop offset=".5" stop-color="#b8bbbb"/><stop offset="1" stop-color="#777b7c"/></linearGradient><path d="M1 10h42l-5 40c-1 6-31 6-32 0z" fill="url(#tr)"/><path d="M9 16l3 34M18 16l1 36M26 16l-1 36M35 16l-3 34" stroke="#686c6d"/><ellipse cx="22" cy="11" rx="21" ry="6" fill="#4f5354" stroke="#c4c7c7" stroke-width="1.500"/><path d="M5 11l3-8 6 3 5-5 6 5 6-4 3 6 5 2-8 4-8-3-8 4z" fill="#e3e5e5"/></svg></div>
  </nav>

  <div class="sharebar">
    <svg width="10" height="18" viewBox="0 0 10 18"><path d="M2 0v18M8 0v18" stroke="#c9c9c9" stroke-width="3"/></svg>
    <span class="sharebar__text">screen-recorder.com is sharing your screen.</span>
    <button class="sharebar__stop">Stop sharing</button>
    <a href="#">Hide</a>
  </div>
</div>

<button class="play" aria-label="Play"><svg width="24" height="32" viewBox="0 0 24 32"><path d="M0 0l24 16L0 32z" fill="#e4e4e4"/></svg></button>
</body>
</html>
```

FILE: styles.css
```css
* { box-sizing: border-box; }

body {
  margin: 0;
  height: 100vh;
  background: #000;
  border: 3px solid #1b1b1b;
  border-width: 6px 3px 3px 0;
  color: #fafafa;
  font-family: Inter, "Liberation Sans", sans-serif;
  overflow: hidden;
}

h1, h2, h3, p, ul, dl, dd, figure { margin: 0; padding: 0; }
ul { list-style: none; }
svg { display: block; flex: none; }
button { border: 0; padding: 0; background: none; color: inherit; font: inherit; cursor: pointer; }
a { color: inherit; text-decoration: none; }
.sprite { position: absolute; width: 0; height: 0; }

.desktop {
  position: relative;
  height: 100%;
  padding: 0 120px 8px;
  display: flex;
  flex-direction: column;
}

/* System menu bar */
.menubar {
  height: 38px;
  flex: none;
  display: flex;
  justify-content: space-between;
  align-items: center;
  padding: 0 28px 0 29px;
  background: #08090c;
  color: #eceded;
  font-size: 19px;
  font-weight: 500;
  white-space: nowrap;
}
.menubar__menus { display: flex; align-items: center; gap: 31px; padding-bottom: 2px; }
.menubar__apple { width: 24px; height: 24px; margin-right: -2px; }
.menubar__app { font-size: 20px; font-weight: 700; }
.status { display: flex; align-items: center; height: 100%; }
.status__share {
  width: 60px;
  height: 100%;
  margin-right: 6px;
  border-radius: 6px;
  background: #5b51d3;
  display: flex;
  align-items: center;
  justify-content: center;
}
.status__slot { width: 54px; display: flex; justify-content: center; color: #cfcfcf; }
.status__slot--wide { width: 74px; }
.status__slot--narrow { width: 50px; }
.status__slot--siri { width: 46px; }
.status__battery { display: flex; align-items: center; gap: 8px; padding: 0 12px 0 8px; font-size: 17px; }
.status__clock { display: flex; gap: 12px; padding: 0 2px 2px 12px; }

/* Browser window */
.window {
  flex: 1;
  min-height: 0;
  display: flex;
  flex-direction: column;
  border: 1px solid #4b5058;
  border-radius: 14px;
  overflow: hidden;
  background: #353e4c;
}
.tabstrip {
  height: 60px;
  flex: none;
  display: flex;
  align-items: center;
  padding-right: 8px;
  background: #192131;
  color: #d6dbe3;
}
.lights { display: flex; gap: 11px; padding: 0 24px 0 30px; }
.light { width: 19px; height: 19px; border-radius: 50%; }
.light--close { background: #ec6a5e; }
.light--min { background: #f4bf4f; }
.light--max { background: #5fc454; }
.tabs { flex: 1; display: flex; color: #f2f4f6; }
.tabs li {
  flex: 100 1 0;
  display: flex;
  justify-content: center;
  border-right: 1px solid #343d4c;
}
.tabs li:nth-child(-n+25) { flex-grow: 103; }
.tabs li:last-child { border-right-color: transparent; }
.tabs svg { width: 24px; height: 24px; }
.activetab {
  position: relative;
  width: 48px;
  height: 52px;
  margin: 0 4px;
  padding-bottom: 8px;
  align-self: flex-end;
  border-radius: 12px 12px 0 0;
  background: #353e4c;
  display: flex;
  align-items: center;
  justify-content: center;
}
.activetab::before, .activetab::after {
  content: "";
  position: absolute;
  bottom: 0;
  width: 12px;
  height: 12px;
}
.activetab::before { right: 100%; background: radial-gradient(circle at 0 0, transparent 12px, #353e4c 12px); }
.activetab::after { left: 100%; background: radial-gradient(circle at 100% 0, transparent 12px, #353e4c 12px); }
.rectab { width: 46px; display: flex; justify-content: center; border-right: 1px solid #343d4c; }
.newtab { width: 50px; display: flex; justify-content: center; margin-right: 78px; }
.tabsearch {
  width: 42px;
  height: 42px;
  border-radius: 14px;
  background: #2f3845;
  display: flex;
  align-items: center;
  justify-content: center;
}

.toolbar {
  flex: none;
  height: 68px;
  display: flex;
  align-items: center;
  padding: 0 6px;
  color: #c9cfd8;
}
.navbtn { width: 54px; display: flex; justify-content: center; }
.navbtn--off { color: #76808e; }
.omnibox {
  flex: 1;
  height: 51px;
  margin: 0 14px 0 12px;
  padding: 0 24px 0 4px;
  border-radius: 26px;
  background: #1d2433;
  display: flex;
  align-items: center;
}
.omnibox__info {
  width: 43px;
  height: 43px;
  border-radius: 50%;
  background: #2a343f;
  display: flex;
  align-items: center;
  justify-content: center;
}
.omnibox__input {
  flex: 1;
  border: 0;
  padding: 0 9px;
  background: none;
  color: #d8dde5;
  font: 400 21px Inter, "Liberation Sans", sans-serif;
}
.toolbtn { width: 54px; display: flex; justify-content: center; }
.toolbar__sep { width: 2px; height: 22px; margin: 0 11px; background: #4b5563; }

.bookmarks {
  flex: none;
  height: 53px;
  display: flex;
  align-items: center;
  padding: 0 28px 10px;
  color: #bcc4d0;
  font-size: 18px;
  white-space: nowrap;
}
.bookmarks__sep { width: 2px; height: 24px; margin: 0 22px; background: #4b5563; }
.bookmarks a { display: flex; align-items: center; gap: 9px; margin-right: 25px; }
.bookmarks a svg { width: 24px; height: 24px; color: #f2f4f6; }
.bookmarks .bookmarks__mid { margin-right: 30px; }
.bookmarks .bookmarks__long { width: 233px; margin-right: 0; }
.bookmarks__more { margin: 0 18px 0 auto; }

/* App page */
.page {
  flex: 1;
  min-height: 0;
  display: flex;
  border-top: 4px solid;
  border-image: linear-gradient(90deg, #c0505a, #d98a80 40%, #e3b894 70%, #e6cf92) 1;
  background: #0d0f14;
  font-family: "Noto Sans CJK SC", "Noto Sans", sans-serif;
  font-weight: 500;
}
.sidebar {
  width: 507px;
  flex: none;
  padding: 140px 36px 0;
  background: #26252c;
}
.sidebar__title { font-size: 26px; line-height: 40px; font-weight: 700; margin-bottom: 25px; }
.field { margin-bottom: 27px; }
.field label { display: block; margin-bottom: 10px; font-size: 19px; line-height: 30px; color: #dedfe3; }
.field__box {
  width: 100%;
  height: 60px;
  padding: 0 18px;
  border: 0;
  border-radius: 10px;
  background: #0e0d13;
  color: #f0f1f4;
  font: 500 21px "Noto Sans CJK SC", "Noto Sans", sans-serif;
  appearance: none;
}
.field__select { position: relative; }
.field__select svg { position: absolute; right: 22px; top: 22px; width: 18px; height: 18px; }

.main { flex: 1; min-width: 0; }
.appbar {
  position: relative;
  display: flex;
  justify-content: flex-end;
  align-items: center;
  gap: 19px;
  padding: 27px 34px 0;
  font-size: 19px;
}
.appbar__menu {
  width: 48px;
  height: 48px;
  border-radius: 12px;
  background: #36393d;
  display: flex;
  align-items: center;
  justify-content: center;
}
.menu {
  position: absolute;
  top: 88px;
  right: 29px;
  width: 294px;
  border: 1px solid #2f3338;
  border-radius: 12px;
  background: #0d0f14;
  overflow: hidden;
  font-size: 21px;
}
.menu__group { padding: 12px 0; border-top: 1px solid #2f3338; }
.menu__group:first-child { border-top: 0; }
.menu button { display: flex; align-items: center; gap: 20px; width: 100%; height: 51px; padding: 0 36px 3px; }
.menu kbd { font: inherit; font-size: 17px; color: #83868c; }
.menu__group--dev { padding: 0; background: #24272c; }
.menu__group--dev p { padding: 0 36px; font-size: 16px; line-height: 42px; color: #d4d6da; }

.content { padding: 98px 122px 0 121px; }
h1 { display: flex; align-items: center; gap: 14px; font-size: 59px; line-height: 72px; font-weight: 700; white-space: nowrap; }
.pad { width: 66px; height: 58px; }
.lead { margin-top: 31px; font-size: 21px; line-height: 38px; color: #e8eaed; white-space: nowrap; }
.viewtabs {
  display: flex;
  gap: 25px;
  margin-top: 39px;
  box-shadow: inset 0 -3px #26282e;
  font-size: 19px;
}
.viewtabs button { display: flex; align-items: center; gap: 4px; height: 50px; padding-bottom: 16px; border-bottom: 4px solid transparent; }
.viewtabs svg { width: 20px; height: 20px; }
.viewtabs .is-active { border-color: #d4524f; color: #dd4458; }
h2 { font-weight: 700; }
.content h2 { margin-top: 49px; font-size: 47px; line-height: 60px; }
.metrics { display: grid; grid-template-columns: repeat(4, 1fr); gap: 16px; margin-top: 32px; }
dt { font-size: 19px; line-height: 30px; font-weight: 400; }
dd { margin-top: 5px; font-size: 49px; line-height: 60px; font-weight: 400; }
h3 { margin-top: 54px; font-size: 36px; line-height: 48px; }
.charts { display: grid; grid-template-columns: 1fr 1fr; gap: 16px; margin-top: 80px; }
figcaption { padding-left: 6px; font-size: 22px; line-height: 30px; font-weight: 700; }
.plot { display: flex; justify-content: space-between; margin-top: 68px; }
.plot--device { padding-left: 75px; }
.plot--game { padding-left: 65px; }
.pie { width: 404px; height: 404px; }
.legend { width: 140px; padding-top: 8px; font-size: 16px; line-height: 29px; }
.legend li { display: flex; align-items: center; gap: 21px; }
.legend li::before { content: ""; width: 19px; height: 19px; }
.legend__mystic::before { background: #96caed; }
.legend__quest::before { background: #ca6680; }

/* Desktop below the window */
.filelabel {
  height: 30px;
  flex: none;
  padding-left: 588px;
  color: #77797b;
  font-size: 18px;
  line-height: 12px;
  font-weight: 500;
}
.dock {
  flex: none;
  height: 76px;
  margin: 0 51px 0 49px;
  padding: 0 6px 3px 4px;
  display: flex;
  align-items: center;
  border: 1px solid #343636;
  border-radius: 24px;
  background: #1a1b1b;
}
.slot { position: relative; flex: 1 1 0; display: flex; justify-content: center; }
.slot > svg { width: 49px; height: 49px; }
.slot > .trash { width: 44px; height: 56px; }
.slot--on::after {
  content: "";
  position: absolute;
  top: 57px;
  width: 6px;
  height: 6px;
  border-radius: 50%;
  background: #a5a6a6;
}
.dock__sep { width: 1px; height: 56px; margin: 0 15px; background: #4d4f4f; }
.cal {
  width: 49px;
  height: 49px;
  border-radius: 12px;
  background: linear-gradient(#e0473f 16px, #f8f8f8 16px);
  text-align: center;
}
.cal span { display: block; font-size: 11px; line-height: 17px; font-weight: 600; }
.cal b { display: block; color: #2b2b2b; font-size: 28px; line-height: 30px; font-weight: 400; }
.badge {
  position: absolute;
  top: -8px;
  right: 0;
  width: 24px;
  height: 24px;
  border-radius: 50%;
  background: #e0443c;
  font-size: 14px;
  line-height: 24px;
  text-align: center;
}
.thumb { position: relative; width: 56px; height: 34px; background: #202222; }
.thumb svg { position: absolute; right: 0; bottom: -12px; width: 20px; height: 20px; padding: 1px; border-radius: 5px; background: #f3efe9; }
.thumb--photo { background: radial-gradient(ellipse at 50% 50%, #d8dadb 10%, #6c7073 30%, #1b1d1f 65%); }
.thumb--white { background: #fafafa; }
.thumb--page { background: linear-gradient(#2b2d30 6px, #131416 6px); }

/* Overlays */
.sharebar {
  position: absolute;
  left: 50%;
  bottom: 98px;
  transform: translateX(-50%);
  display: flex;
  align-items: center;
  height: 71px;
  padding: 0 16px;
  border: 1px solid #2e2e31;
  background: #1f1f22;
  font-size: 18px;
  white-space: nowrap;
}
.sharebar__text { margin: 0 15px; color: #e2e2e4; }
.sharebar__stop {
  width: 169px;
  height: 55px;
  margin-right: 15px;
  border-radius: 28px;
  background: #38383b;
  color: #98989b;
  font-size: 20px;
}
.sharebar a { color: #a5bbe8; text-decoration: underline; text-underline-offset: 4px; }
.play {
  position: fixed;
  left: 50%;
  top: 50%;
  transform: translate(-50%, -50%);
  width: 108px;
  height: 108px;
  margin-top: 2px;
  padding-left: 4px;
  border-radius: 14px;
  background: #121212;
  display: flex;
  align-items: center;
  justify-content: center;
}
```
